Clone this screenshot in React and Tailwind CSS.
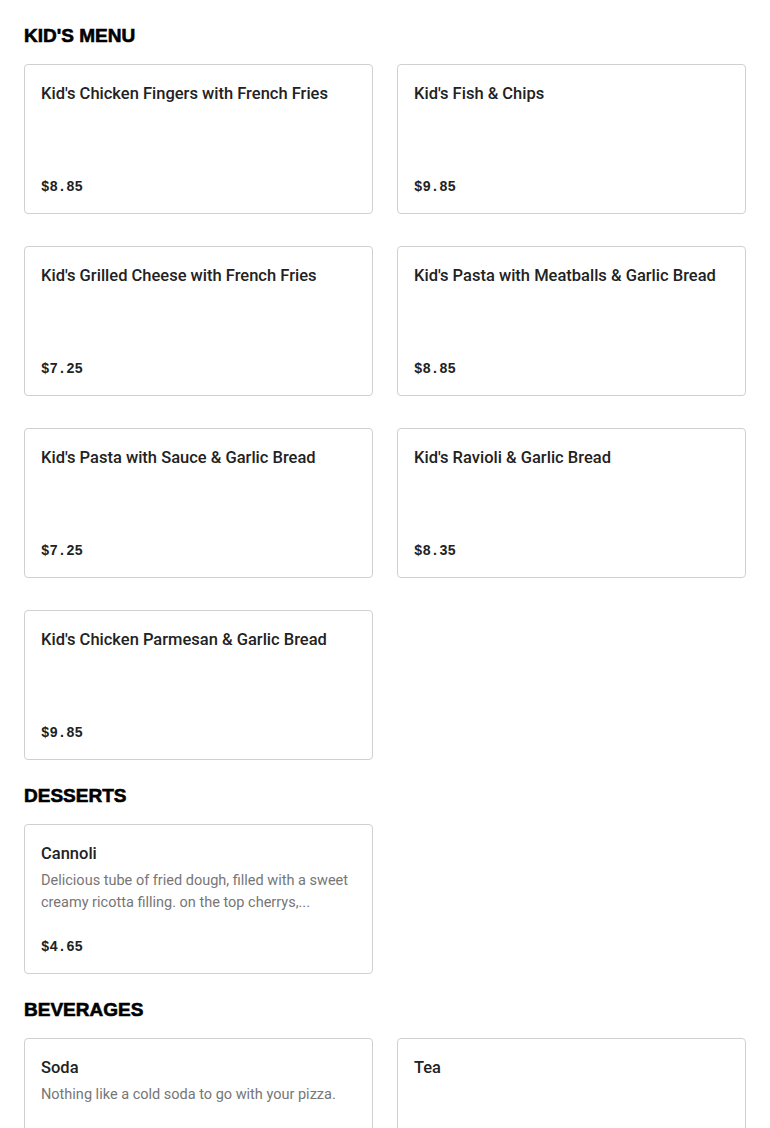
import React from "react";

const sections = [
  {
    title: "KID'S MENU",
    items: [
      { name: "Kid's Chicken Fingers with French Fries", price: "$8.85" },
      { name: "Kid's Fish & Chips", price: "$9.85" },
      { name: "Kid's Grilled Cheese with French Fries", price: "$7.25" },
      { name: "Kid's Pasta with Meatballs & Garlic Bread", price: "$8.85" },
      { name: "Kid's Pasta with Sauce & Garlic Bread", price: "$7.25" },
      { name: "Kid's Ravioli & Garlic Bread", price: "$8.35" },
      { name: "Kid's Chicken Parmesan & Garlic Bread", price: "$9.85" },
    ],
  },
  {
    title: "DESSERTS",
    items: [
      {
        name: "Cannoli",
        desc: "Delicious tube of fried dough, filled with a sweet creamy ricotta filling. on the top cherrys,...",
        price: "$4.65",
      },
    ],
  },
  {
    title: "BEVERAGES",
    items: [
      { name: "Soda", desc: "Nothing like a cold soda to go with your pizza.", price: "$2.50" },
      { name: "Tea", price: "$2.50" },
    ],
  },
];

function Card({ item }) {
  return (
    <div className="h-[150px] rounded-[4px] border border-[#d0d0d0] bg-white p-4 flex flex-col justify-between">
      <div>
        <div className="mt-px text-[16.5px] leading-6 font-medium text-[#222]" style={{ fontFamily: "Roboto, 'Noto Sans', sans-serif" }}>
          {item.name}
        </div>
        {item.desc && (
          <div className="mt-1 text-[14.5px] leading-[22px] text-[#767676] line-clamp-2" style={{ fontFamily: "Roboto, 'Noto Sans', sans-serif" }}>
            {item.desc}
          </div>
        )}
      </div>
      <div className="text-[14px] leading-5 font-bold text-[#222]" style={{ fontFamily: "'Liberation Mono', monospace" }}>
        {item.price}
      </div>
    </div>
  );
}

export default function App() {
  return (
    <div className="bg-white px-6 pt-[22px] pb-10 min-h-screen">
      {sections.map((s) => (
        <div key={s.title} className="mb-[22px]">
          <h2
            className="text-[19px] leading-7 font-black text-black mb-[14px] [-webkit-text-stroke:0.6px_black]"
            style={{ fontFamily: "'Liberation Sans', Arial, sans-serif" }}
          >
            {s.title}
          </h2>
          <div className="grid grid-cols-2 gap-x-6 gap-y-8">
            {s.items.map((it) => (
              <Card key={it.name} item={it} />
            ))}
          </div>
        </div>
      ))}
    </div>
  );
}
